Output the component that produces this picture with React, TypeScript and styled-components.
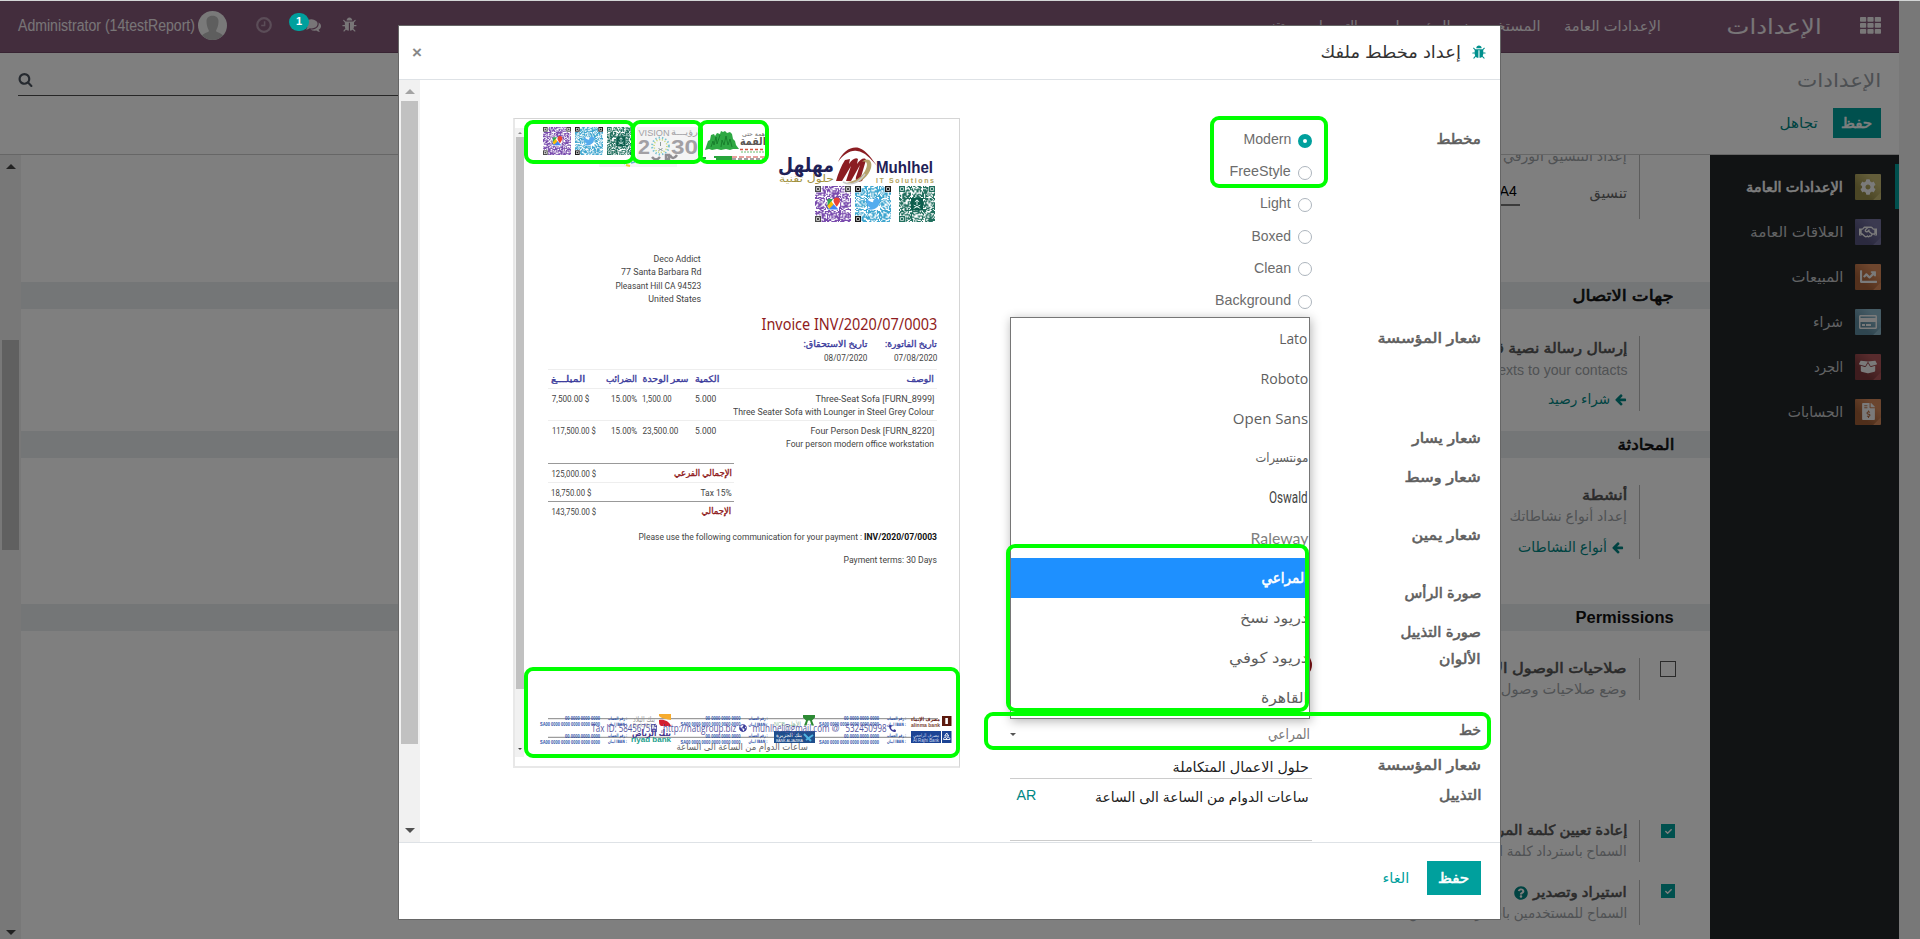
import React, { useLayoutEffect, useRef, useState } from "react";
import styled, { createGlobalStyle } from "styled-components";
import { FaCog, FaRegHandshake, FaChartLine, FaRegCreditCard, FaBoxOpen, FaFileInvoiceDollar, FaQuestionCircle, FaPhoneAlt, FaGlobeAmericas, FaRegFileAlt, FaCheck } from "react-icons/fa";

const UI = `"Liberation Sans", "DejaVu Sans", sans-serif`;
const DOC = `Roboto, "DejaVu Sans", sans-serif`;

const GlobalStyle = createGlobalStyle`
  * { box-sizing: border-box; }
  html, body { margin: 0; padding: 0; overflow: hidden; background: #fff; }
  body { font-family: ${UI}; }
  svg { display: block; flex-shrink: 0; }
`;

/* ---------- text that is condensed or stretched to a set width ---------- */

const FitBox = styled.span<{ $w: number; $lh: number }>`
  display: inline-flex;
  justify-content: center;
  flex-shrink: 0;
  width: ${(p) => p.$w}px;
  height: ${(p) => p.$lh}px;
  line-height: ${(p) => p.$lh}px;
`;
const FitInner = styled.span<{ $size: number; $color: string; $bold?: boolean; $arabic: boolean; $font: string }>`
  flex-shrink: 0;
  white-space: nowrap;
  font-family: ${(p) => p.$font};
  font-size: ${(p) => p.$size}px;
  font-weight: ${(p) => (p.$bold && !p.$arabic ? 700 : 400)};
  -webkit-text-stroke: ${(p) => (p.$bold && p.$arabic ? p.$size * 0.04 : 0)}px ${(p) => p.$color};
  color: ${(p) => p.$color};
`;

type TextProps = { w: number; size?: number; color?: string; bold?: boolean; font?: string; lh?: number; children: string };

function Text({ w, size = 14, color = "#666", bold, font = UI, lh = 20, children }: TextProps) {
  const ref = useRef<HTMLSpanElement>(null);
  const [scale, setScale] = useState(1);
  useLayoutEffect(() => {
    if (ref.current) setScale(w / ref.current.offsetWidth);
  }, [w, children]);
  const arabic = /[\u0600-\u06ff]/.test(children);
  return (
    <FitBox $w={w} $lh={lh} dir={arabic ? "rtl" : "ltr"}>
      <FitInner ref={ref} $size={size} $color={color} $bold={bold} $arabic={arabic} $font={font} style={{ transform: `scaleX(${scale})` }}>
        {children}
      </FitInner>
    </FitBox>
  );
}

/* ---------- icons ---------- */

const glyphs = {
  bug: "M1632 960q0 26-19 45t-45 19h-224q0 171-67 290l208 209q19 19 19 45t-19 45q-18 19-45 19t-45-19l-198-197q-5 5-15 13t-42 28.5-65 36.5-82 29-97 13v-896h-128v896q-51 0-101.5-13.5t-87-33-66-39-43.5-32.5l-15-14-183 207q-20 21-48 21-24 0-43-16-19-18-20.5-44.5t15.5-46.5l202-227q-58-114-58-274h-224q-26 0-45-19t-19-45 19-45 45-19h224v-294l-173-173q-19-19-19-45t19-45 45-19 45 19l173 173h844l173-173q19-19 45-19t45 19 19 45-19 45l-173 173v294h224q26 0 45 19t19 45zm-480-576h-640q0-133 93.5-226.5t226.5-93.5 226.5 93.5 93.5 226.5z",
  comments:
    "M1408 768q0 139-94 257t-256.5 186.5-353.5 68.5q-86 0-176-16-124 88-278 128-36 9-86 16h-3q-11 0-20.5-8t-11.5-21q-1-3-1-6.5t.5-6.5 2-6l2.5-5 3.5-5.5 4-5 4.5-5 4-4.5q5-6 23-25t26-29.5 22.5-29 25-38.5 20.5-44q-124-72-195-177t-71-224q0-139 94-257t256.5-186.5 353.5-68.5 353.5 68.5 256.5 186.5 94 257zm384 256q0 120-71 224.5t-195 176.5q10 24 20.5 44t25 38.5 22.5 29 26 29.5 23 25q1 1 4 4.5t4.5 5 4 5 3.5 5.5l2.5 5 2 6 .5 6.5-1 6.5q-3 14-13 22t-22 7q-50-7-86-16-154-40-278-128-90 16-176 16-271 0-472-132 58 4 88 4 161 0 309-45t264-129q125-92 192-212t67-254q0-77-23-152 129 71 204 178t75 230z",
  search:
    "M1216 832q0-185-131.5-316.5t-316.5-131.5-316.5 131.5-131.5 316.5 131.5 316.5 316.5 131.5 316.5-131.5 131.5-316.5zm512 832q0 52-38 90t-90 38q-54 0-90-38l-343-342q-179 124-399 124-143 0-273.5-55.5t-225-150-150-225-55.5-273.5 55.5-273.5 150-225 225-150 273.5-55.5 273.5 55.5 225 150 150 225 55.5 273.5q0 220-124 399l343 343q37 37 37 90z",
  arrowLeft:
    "M1664 896v128q0 53-32.5 90.5t-84.5 37.5h-704l293 294q38 36 38 90t-38 90l-75 76q-37 37-90 37-52 0-91-37l-651-652q-37-37-37-90 0-52 37-91l651-650q38-38 91-38 52 0 90 38l75 74q38 38 38 91t-38 91l-293 293h704q52 0 84.5 37.5t32.5 90.5z",
};

const Glyph = ({ name, size, color }: { name: keyof typeof glyphs; size: number; color: string }) => (
  <svg width={size} height={size} viewBox="0 0 1792 1792" fill={color}>
    <path d={glyphs[name]} />
  </svg>
);

const AppsIcon = () => (
  <svg width="21" height="17" viewBox="0 0 21 17" fill="#f2eef1">
    {[0, 6, 12].map((y) => [0, 7.4, 14.8].map((x) => <rect key={`${x}-${y}`} x={x} y={y} width="6.2" height="4.8" rx="0.8" />))}
  </svg>
);

const ClockIcon = () => (
  <svg width="16" height="16" viewBox="0 0 16 16" fill="none" stroke="#b79bb0">
    <circle cx="8" cy="8" r="6.8" strokeWidth="2.2" />
    <path d="M8.6 4.2v4.4H5.2" strokeWidth="1.5" />
  </svg>
);

const Avatar = () => (
  <svg width="29" height="29" viewBox="0 0 29 29">
    <defs>
      <clipPath id="avatarClip"><circle cx="14.5" cy="14.5" r="14.5" /></clipPath>
    </defs>
    <g clipPath="url(#avatarClip)">
      <rect width="29" height="29" fill="#f2f2f2" />
      <path d="M8.5 10c0-7 12-7 12 0 0 6-2 8-2.500 10 1 2 8 1.500 9 9h-25c1-7.500 8-7 9-9-.5-2-2.500-4-2.500-10z" fill="#bdbdbd" />
    </g>
  </svg>
);

/* ---------- shell ---------- */

const Screen = styled.div`
  position: relative;
  width: 1920px;
  height: 939px;
  overflow: hidden;
  display: flex;
  background: #fff;
  border-top: 1px solid #d3d6d6;
`;
const Backend = styled.div`
  width: 1899px;
  display: flex;
  flex-direction: column;
`;
const WindowGutter = styled.div`
  width: 21px;
  background: #f1f1f1;
`;
const Navbar = styled.header`
  display: flex;
  justify-content: space-between;
  height: 52px;
  padding: 0 18px;
  background: #875a7b;
  border-bottom: 1px solid #704866;
`;
const NavSide = styled.div`
  display: flex;
  align-items: flex-start;
`;
const Slot = styled.div<{ $top?: number; $left?: number; $right?: number }>`
  display: flex;
  margin: ${(p) => `${p.$top ?? 0}px ${p.$right ?? 0}px 0 ${p.$left ?? 0}px`};
`;
const Badge = styled.span`
  display: flex;
  justify-content: center;
  width: 20px;
  height: 18px;
  margin: 12px -4px 0 17px;
  border-radius: 9px;
  background: #00a09d;
  color: #fff;
  font: 700 11px/17px ${UI};
  z-index: 1;
`;
const ControlPanel = styled.div`
  display: flex;
  justify-content: space-between;
  height: 102px;
  padding: 0 18px;
  border-bottom: 1px solid #ccc;
`;
const SearchBox = styled.div`
  width: 900px;
  height: 43px;
  padding-top: 19px;
  border-bottom: 1px solid #4c4c4c;
`;
const PanelActions = styled.div`
  display: flex;
  flex-direction: column;
  align-items: flex-end;
  padding-top: 15px;
`;
const ButtonRow = styled.div<{ $gap: number; $top: number }>`
  display: flex;
  align-items: center;
  gap: ${(p) => p.$gap}px;
  margin-top: ${(p) => p.$top}px;
`;
const PrimaryButton = styled.button<{ $w: number; $h: number }>`
  display: flex;
  align-items: center;
  justify-content: center;
  width: ${(p) => p.$w}px;
  height: ${(p) => p.$h}px;
  padding: 0;
  border: 0;
  background: #00a09d;
`;
const Main = styled.div`
  display: flex;
  flex: 1;
  min-height: 0;
`;

/* ---------- scroll bars ---------- */

const Track = styled.div<{ $w: number }>`
  display: flex;
  flex-direction: column;
  align-items: center;
  flex-shrink: 0;
  width: ${(p) => p.$w}px;
  background: #f1f1f1;
`;
const Thumb = styled.div<{ $top: number; $h: number; $w: number }>`
  width: ${(p) => p.$w}px;
  height: ${(p) => p.$h}px;
  margin-top: ${(p) => p.$top}px;
  background: #c1c1c1;
`;
const Arrow = styled.i<{ $s: number; $m: string; $down?: boolean; $color: string }>`
  width: 0;
  height: 0;
  margin: ${(p) => p.$m};
  border: ${(p) => p.$s}px solid transparent;
  ${(p) => (p.$down ? `border-bottom: 0; border-top-color: ${p.$color};` : `border-top: 0; border-bottom-color: ${p.$color};`)}
`;

/* ---------- settings page ---------- */

const Settings = styled.div`
  flex: 1;
  overflow: hidden;
  direction: rtl;
`;
const Band = styled.div<{ $mt: number }>`
  height: 27px;
  margin-top: ${(p) => p.$mt}px;
  padding-right: 36px;
  background: #e9ecef;
`;
const SettingRow = styled.div<{ $mt: number; $h: number }>`
  display: flex;
  height: ${(p) => p.$h}px;
  margin-top: ${(p) => p.$mt}px;
`;
const CheckCell = styled.div`
  width: 70px;
  padding: 4px 35px 0 0;
`;
const CheckBox = styled.span<{ $on?: boolean }>`
  display: flex;
  align-items: center;
  justify-content: center;
  width: ${(p) => (p.$on ? 14 : 16)}px;
  height: ${(p) => (p.$on ? 14 : 16)}px;
  margin: ${(p) => (p.$on ? "0" : "-1px -1px 0 0")};
  border: ${(p) => (p.$on ? "0" : "1px solid #555")};
  background: ${(p) => (p.$on ? "#00a09d" : "#fff")};
  color: #fff;
`;
const SettingBody = styled.div`
  display: flex;
  flex-direction: column;
  align-items: flex-start;
  border-right: 1px solid #bbb;
  padding-right: 12px;
`;
const InlineRow = styled.div<{ $mt?: number; $gap?: number; $pad?: number }>`
  display: flex;
  align-items: center;
  gap: ${(p) => p.$gap ?? 0}px;
  margin-top: ${(p) => p.$mt ?? 0}px;
  padding-right: ${(p) => p.$pad ?? 0}px;
`;
const SelectStub = styled.span`
  display: flex;
  width: 170px;
  height: 26px;
  margin-right: 69px;
  padding-right: 3px;
  border-bottom: 2px solid #777;
`;
const Sidebar = styled.nav`
  display: flex;
  flex-direction: column;
  width: 189px;
  padding-top: 9px;
  background: #222629;
`;
const SideItem = styled.div<{ $active?: boolean }>`
  display: flex;
  align-items: center;
  justify-content: flex-end;
  gap: 12px;
  height: 45px;
  padding-right: ${(p) => (p.$active ? 14 : 18)}px;
  border-right: ${(p) => (p.$active ? "4px solid #00a09d" : "0")};
`;
const AppTile = styled.span<{ $color: string; $shade: string }>`
  display: flex;
  align-items: center;
  justify-content: center;
  width: 26px;
  height: 26px;
  border-radius: 1px;
  background:
    linear-gradient(135deg, transparent 84%, ${(p) => p.$color} 86%),
    linear-gradient(45deg, ${(p) => p.$shade} 30%, ${(p) => p.$color} 75%);
  color: #f5f5f5;
`;

/* ---------- dialog ---------- */

const Backdrop = styled.div`
  position: absolute;
  inset: 0;
  background: rgba(0, 0, 0, 0.5);
`;
const Dialog = styled.section`
  position: absolute;
  left: 398px;
  top: 24px;
  width: 1103px;
  height: 895px;
  display: flex;
  flex-direction: column;
  border: 1px solid #666;
  background: #fff;
`;
const DialogHeader = styled.div`
  display: flex;
  justify-content: space-between;
  height: 54px;
  padding: 0 13px 0 14px;
  border-bottom: 1px solid #dee2e6;
`;
const CloseMark = styled.span`
  color: #888;
  font: 700 17px/53px ${UI};
  margin-left: -1px;
`;
const DialogTitle = styled.div`
  display: flex;
  align-items: center;
  gap: 11px;
`;
const DialogBody = styled.div`
  display: flex;
  height: 762px;
`;
const DialogFooter = styled.div`
  display: flex;
  justify-content: flex-end;
  align-items: flex-start;
  height: 77px;
  padding-right: 19px;
  border-top: 1px solid #dee2e6;
`;
const Paper = styled.div`
  display: flex;
  width: 447px;
  height: 650px;
  margin: 38px 0 0 93px;
  border: 1px solid #d5d5d5;
  border-left: 2px solid #e8e8e8;
  border-bottom: 2px solid #e8e8e8;
`;
const PaperScroll = styled.div`
  display: flex;
  margin-top: 9px;
  height: 629px;
`;
const Page = styled.div`
  display: flex;
  flex-direction: column;
  width: 435px;
`;
const LogoStrip = styled.div`
  display: flex;
  height: 41px;
  padding: 8px 0 0 19px;
`;
const CompanyBlock = styled.div`
  display: flex;
  flex-direction: column;
  align-items: flex-end;
  padding-right: 24px;
  margin-top: -13px;
  height: 76px;
`;
const QrRow = styled.div<{ $gap: number[] }>`
  display: flex;
  & > svg:nth-child(2) { margin: 0 ${(p) => p.$gap[1]}px 0 ${(p) => p.$gap[0]}px; }
`;
const Address = styled.div`
  display: flex;
  flex-direction: column;
  align-items: flex-end;
  margin-top: 29px;
  padding-right: 258px;
`;
const InvoiceBody = styled.div`
  display: flex;
  flex-direction: column;
  align-items: flex-end;
  width: 389px;
  margin: 7px 0 0 24px;
`;
const Dates = styled.div`
  display: flex;
  gap: 18px;
  margin-top: 2px;
`;
const DateCell = styled.div`
  display: flex;
  flex-direction: column;
  align-items: flex-end;
`;
const ItemRow = styled.div<{ $h: number; $pt: number }>`
  display: grid;
  grid-template-columns: 50px 35.5px 53.5px 30px 1fr;
  width: 389px;
  height: ${(p) => p.$h}px;
  padding: ${(p) => p.$pt}px 3px 0 3.5px;
  border-top: 1px solid #eee;
`;
const ItemCell = styled.div<{ $end?: boolean; $pad?: number }>`
  display: flex;
  flex-direction: column;
  align-items: ${(p) => (p.$end ? "flex-end" : "flex-start")};
  padding-left: ${(p) => p.$pad ?? 0}px;
`;
const Totals = styled.div`
  align-self: flex-start;
  width: 186px;
  margin-top: 0.5px;
`;
const TotalRow = styled.div<{ $strong?: boolean }>`
  display: flex;
  justify-content: space-between;
  height: 19.3px;
  padding: 1px 2.5px 0 3.5px;
  border-top: 1px solid ${(p) => (p.$strong ? "#999" : "#eee")};
`;
const PaymentLine = styled.div<{ $mt: number }>`
  display: flex;
  gap: 2px;
  margin-top: ${(p) => p.$mt}px;
`;
const PageFooter = styled.div`
  position: relative;
  height: 46px;
  margin-top: auto;
  padding-top: 5px;
`;
const ContactRow = styled.div`
  position: absolute;
  left: 67px;
  top: 13px;
  display: flex;
  align-items: center;
  color: #3c3c9a;
`;
const HoursRow = styled.div`
  position: absolute;
  left: 153px;
  top: 29px;
`;

/* ---------- form ---------- */

const Form = styled.div`
  display: flex;
  flex-direction: column;
  width: 521px;
  padding: 47px 19px 0 0;
  margin-left: auto;
`;
const FormRow = styled.div<{ $h: number }>`
  display: flex;
  justify-content: space-between;
  height: ${(p) => p.$h}px;
`;
const Field = styled.div`
  position: relative;
  width: 302px;
  margin-left: 31px;
`;
const RadioRow = styled.label`
  display: flex;
  align-items: center;
  justify-content: flex-end;
  gap: 7px;
  height: 32.2px;
`;
const RadioDot = styled.span<{ $on?: boolean }>`
  width: 14px;
  height: 14px;
  margin-top: 3px;
  border-radius: 50%;
  border: ${(p) => (p.$on ? "5px solid #00a09d" : "1px solid #adb5bd")};
`;
const RadioGroup = styled.div`
  display: flex;
  flex-direction: column;
  margin-top: -4px;
`;
const Swatch = styled.span`
  display: block;
  width: 24px;
  height: 24px;
  margin: 6px 0 0 278px;
  border-radius: 50%;
  background: #7d1014;
`;
const Menu = styled.div`
  position: absolute;
  left: 0;
  top: -401px;
  width: 300px;
  height: 402px;
  z-index: 2;
  border: 1px solid #767676;
  background: #fff;
  box-shadow: 1px 2px 10px rgba(0, 0, 0, 0.3);
`;
const Option = styled.div<{ $selected?: boolean }>`
  display: flex;
  align-items: center;
  justify-content: flex-end;
  height: 40px;
  padding-right: 1px;
  background: ${(p) => (p.$selected ? "#1e90ff" : "#fff")};
`;
const SelectValue = styled.div`
  display: flex;
  align-items: center;
  justify-content: space-between;
  height: 32px;
  padding: 0 2px 0 0;
`;
const Input = styled.div<{ $h: number; $top: number }>`
  display: flex;
  justify-content: space-between;
  height: ${(p) => p.$h}px;
  padding: ${(p) => p.$top}px 3px 0 6px;
  border-bottom: 1px solid #ccc;
`;
const Highlight = styled.div<{ $x: number; $y: number; $w: number; $h: number }>`
  position: absolute;
  z-index: 5;
  left: ${(p) => p.$x}px;
  top: ${(p) => p.$y - 1}px;
  width: ${(p) => p.$w}px;
  height: ${(p) => p.$h}px;
  border: 4px solid #0f0;
  border-radius: 9px;
`;

/* ---------- drawings ---------- */

function modules(seed: number, n: number) {
  let s = seed;
  let d = "";
  for (let y = 0; y < n; y++)
    for (let x = 0; x < n; x++) {
      s = (s * 16807) % 2147483647;
      const corner = (x < 6 && y < 6) || (x >= n - 6 && y < 6) || (x < 6 && y >= n - 6);
      const mid = Math.abs(x - n / 2) < 5 && Math.abs(y - n / 2) < 5;
      if (!corner && !mid && s / 2147483647 > 0.4) d += `M${x} ${y}h1v1h-1z`;
    }
  return d;
}

function Qr({ size, color, eye, kind }: { size: number; color: string; eye: string; kind: "map" | "bird" | "crest" }) {
  return (
    <svg width={size} height={size} viewBox="0 0 33 33">
      <path d={modules(kind.length * 977 + 31, 33)} fill={color} />
      {[[0, 0], [27.5, 0], [0, 27.5]].map(([x, y]) => (
        <g key={`${x}${y}`}>
          <rect x={x + 0.6} y={y + 0.6} width="4.3" height="4.3" fill="none" stroke={eye} strokeWidth="1.2" />
          <rect x={x + 1.8} y={y + 1.8} width="1.9" height="1.9" fill={eye} />
        </g>
      ))}
      {kind === "map" && (
        <g>
          <path d="M11.5 12h5l-5 8z" fill="#34a853" />
          <path d="M11.5 21l5-5 5 5.5h-10z" fill="#4285f4" />
          <path d="M13 21l4-4-2-3-3.5 4z" fill="#fbbc05" />
          <path d="M17 13.5a2.9 2.9 0 015.8 0c0 2-2.9 5.5-2.9 5.5s-2.9-3.5-2.9-5.5z" fill="#ea4335" />
        </g>
      )}
      {kind === "bird" && (
        <path d="M11 12c1.8 2 3.6 2.8 5.6 2.9-.3-2 1.4-3.9 3.4-3.5.9.1 1.5.7 1.9 1l1.5-.5-.8 1.5.9-.2-1.1 1.3c.2 5.3-6.2 9.200-11.900 6.100 1.500 0 2.700-.4 3.500-1.100-1.300-.2-2.200-1-2.500-2h1c-1.300-.5-2-1.500-2-2.800-.5-.8-.2-1.900.5-2.700z" fill="#55acee" />
      )}
      {kind === "crest" && (
        <g>
          <rect x="11" y="11" width="11" height="11.5" fill="#0b5d4c" />
          <path d="M16.5 12.5v5M14.5 14.5l2-1.5 2 1.5M13.5 20.5l6-3M19.5 20.5l-6-3" stroke="#dff3ee" strokeWidth="0.9" fill="none" />
        </g>
      )}
    </svg>
  );
}

const QrSet = ({ size, gap }: { size: number; gap: number[] }) => (
  <QrRow $gap={gap}>
    <Qr size={size} color="#7a4cae" eye="#4a4a4a" kind="map" />
    <Qr size={size} color="#3fa6cf" eye="#1c1c1c" kind="bird" />
    <Qr size={size} color="#22705f" eye="#22705f" kind="crest" />
  </QrRow>
);

const VisionLogo = () => (
  <svg width="100" height="41" viewBox="0 0 100 41">
    <rect x="38" y="0" width="62" height="33" fill="#f4f4f4" />
    <rect x="0" y="33" width="78" height="7" fill="#f5f5f5" />
    <g fill="#a2a0a4" fontFamily={UI}>
      <text x="39.500" y="9" fontSize="9.5" textLength="31" lengthAdjust="spacingAndGlyphs">VISION</text>
      <text x="72" y="7.500" fontSize="8.5" textLength="27" lengthAdjust="spacingAndGlyphs" fontFamily="DejaVu Sans">رؤيـــة</text>
      <text x="39" y="27" fontSize="20.5" fontWeight="700" textLength="12" lengthAdjust="spacingAndGlyphs">2</text>
      <text x="72" y="27" fontSize="20.5" fontWeight="700" textLength="27" lengthAdjust="spacingAndGlyphs">30</text>
      <path d="M53 30q4 5 8 0M67 28h3v4h-3zM71 28q3 6 7 0" stroke="#8f8d91" strokeWidth="2.5" fill="none" />
    </g>
    <circle cx="61.500" cy="19" r="8.400" fill="none" stroke="#7cc3d2" strokeWidth="2" strokeDasharray="1.4 2" />
    <circle cx="61.500" cy="19" r="6.400" fill="none" stroke="#c3d970" strokeWidth="1.5" strokeDasharray="1.1 1.700" />
    <path d="M61.500 15v4M59.500 21.500l4 2M63.500 21.500l-4 2" stroke="#8a9a98" fill="none" />
    <path d="M23 35l3 2" stroke="#58b2c8" strokeWidth="1.5" />
    <path d="M27 38l4 1" stroke="#f0d031" strokeWidth="2" />
    <path d="M32 36l4-1" stroke="#5fb0d0" strokeWidth="1.5" />
  </svg>
);

const SummitLogo = () => (
  <svg width="68" height="36" viewBox="0 0 68 36">
    <path d="M6 23l2-6 1-3 2-1 1-5 3-1 1 2 2-3 3 1 1-3 2 1 2-1 2 2 3-1 2 2 1 5 2 2 1 4 3 4h-6l-3 1-4-1-5 1-4-1-5 1-3-1z" fill="#2fa944" />
    <path d="M12 20l2-6 1 4 2-8 1 7 3-9M22 20l1-7 2 5 2-9 2 9 2-6 2 8" stroke="#167a2a" strokeWidth="0.9" fill="none" />
    <text x="43" y="9" fontFamily="DejaVu Sans" fontSize="6" fill="#666" textLength="23" lengthAdjust="spacingAndGlyphs">همة حتى</text>
    <text x="41" y="18" fontFamily="DejaVu Sans" fontSize="11" fontWeight="700" fill="#5b5552" textLength="26" lengthAdjust="spacingAndGlyphs">القمة</text>
    <path d="M41 22.500h26" stroke="#d2533e" strokeWidth="1.5" strokeDasharray="3 2" />
    <path d="M42 25h24" stroke="#6cbb6e" strokeWidth="1.2" strokeDasharray="2 1" />
    <path d="M0 31h7M15 30h18M17 32h16" stroke="#27a53c" strokeWidth="2" />
    <path d="M33 30h34" stroke="#d0443c" strokeWidth="1.2" strokeDasharray="5 2" />
    <path d="M33 32h34" stroke="#444" strokeWidth="1" strokeDasharray="4 2" />
  </svg>
);

const MuhlhelLogo = () => (
  <svg width="158" height="39" viewBox="0 0 158 39">
    <text x="1" y="25" fontFamily="DejaVu Sans" fontSize="20" fontWeight="700" fill="#1f2157" textLength="56" lengthAdjust="spacingAndGlyphs">مهلهل</text>
    <text x="2" y="35" fontFamily="DejaVu Sans" fontSize="10" fill="#a08f3c" textLength="55" lengthAdjust="spacingAndGlyphs">حلول تقنية</text>
    <path d="M59 34c2-7 5-15 9-21l5-1-1 5c3-5 7-7 9-5l-1 5c3-5 8-7 9-4l-5 17c1 1 3 0 4-2l-3 6c-5 2-7 0-6-4l4-12-9 16h-5l5-15-9 15z" fill="#8b1d22" />
    <path d="M61 15C66 4 74-1 82 1c8 3 13 11 18 18-7-8-12-14-20-15-7-1-13 3-19 11z" fill="#8b1d22" />
    <path d="M69 35c12 4 22-4 25-14 2-8-4-11-9-6 6-2 6 4 3 9-4 7-11 11-19 11z" fill="#b6a26b" />
    <path d="M66 35c9 5 17-1 22-8" stroke="#c9c9c9" strokeWidth="1.5" fill="none" />
    <text x="99" y="26" fontFamily={UI} fontSize="16" fontWeight="700" fill="#1f2157" textLength="57" lengthAdjust="spacingAndGlyphs">Muhlhel</text>
    <text x="99" y="35.500" fontFamily={UI} fontSize="7" fontWeight="700" fill="#b3a45c" textLength="58">IT Solutions</text>
  </svg>
);

const BankStrip = () => (
  <svg width="436" height="36" viewBox="0 0 436 36">
    <path d="M24 6.7h390M24 25.3h390" stroke="#777" strokeWidth="0.9" />
    {[76, 216.5, 355].map((x) =>
      [0, 17.3].map((y) => (
        <g key={`${x}-${y}`} fontFamily={UI} fontSize="4.6" fontWeight="700" fill="#2c50a8">
          <text x={x - 35} y={y + 8.2} textLength="35" lengthAdjust="spacingAndGlyphs">00 0000 0000 0000</text>
          <text x={x - 60} y={y + 14.2} textLength="60" lengthAdjust="spacingAndGlyphs">SA00 0000 0000 0000 0000 0000</text>
          <text x={x + 8} y={y + 7.5} textLength="19" lengthAdjust="spacingAndGlyphs" fontFamily="DejaVu Sans">رقم الحساب :</text>
          <text x={x + 8} y={y + 13.5} textLength="19" lengthAdjust="spacingAndGlyphs" fontFamily="DejaVu Sans">ايبان IBAN :</text>
        </g>
      ))
    )}
    <text x="109" y="10" fontFamily="DejaVu Sans" fontSize="8" fill="#999" textLength="22" lengthAdjust="spacingAndGlyphs">بنك البلاد</text>
    <text x="109" y="15" fontFamily={UI} fontSize="4.5" fill="#aaa" textLength="23" lengthAdjust="spacingAndGlyphs">Bank Albilad</text>
    <path d="M135 2h12v6c-4-1-9-1-12-4z" fill="#f7ac2f" />
    <path d="M135 8c5-1 10 1 12 6h-10c-2-1-2-3-2-6z" fill="#d3202f" />
    <text x="108" y="24" fontFamily="DejaVu Sans" fontSize="9" fontWeight="700" fill="#44338c" textLength="39" lengthAdjust="spacingAndGlyphs">بنك الرياض</text>
    <text x="107" y="30" fontFamily={UI} fontSize="7" fontWeight="700" fill="#1ba08c" textLength="40" lengthAdjust="spacingAndGlyphs">riyad bank</text>
    <text x="250" y="14" fontFamily={UI} fontSize="6" fill="#8bb79d" textLength="11" lengthAdjust="spacingAndGlyphs">NCB</text>
    <text x="262" y="14" fontFamily="DejaVu Sans" fontSize="6" fill="#8bb79d" textLength="15" lengthAdjust="spacingAndGlyphs">الأهلي</text>
    <path d="M279 3h12v2.500l-3 3 2 5h-2.500l-1.500-5h-2l-1.500 5H280l2-5-3-3z" fill="#2d8a34" />
    <rect x="250" y="19" width="41" height="12" fill="#1f4e8c" />
    <path d="M280 22l7 7M282 28l7-5" stroke="#4fb3e0" strokeWidth="2" />
    <text x="252" y="25" fontFamily="DejaVu Sans" fontSize="5.5" fill="#fff" textLength="26" lengthAdjust="spacingAndGlyphs">بنك الجزيرة</text>
    <text x="252" y="30" fontFamily={UI} fontSize="4" fill="#fff" textLength="27" lengthAdjust="spacingAndGlyphs">BANK ALJAZIRA</text>
    <text x="387" y="9" fontFamily="DejaVu Sans" fontSize="5.5" fontWeight="700" fill="#6a2416" textLength="29" lengthAdjust="spacingAndGlyphs">مصرف الإنماء</text>
    <text x="387" y="14.5" fontFamily={UI} fontSize="5.5" fontWeight="700" fill="#7a4636" textLength="29" lengthAdjust="spacingAndGlyphs">alinma bank</text>
    <rect x="418" y="4" width="9.5" height="10" fill="#5c1a0e" />
    <rect x="421.3" y="6" width="2.6" height="6" fill="#fff" />
    <rect x="387" y="19" width="30" height="12" fill="#1c4394" />
    <rect x="418" y="19" width="9.5" height="12" fill="#1c4394" />
    <text x="389" y="24.5" fontFamily="DejaVu Sans" fontSize="5" fill="#cfd9f0" textLength="26" lengthAdjust="spacingAndGlyphs">مصرف الراجحي</text>
    <text x="389" y="30" fontFamily={UI} fontSize="5" fill="#cfd9f0" textLength="26" lengthAdjust="spacingAndGlyphs">Al Rajhi Bank</text>
    <path d="M422.7 21l2 3h-4zM419.500 27.500c0-3 3-3 3 0 0-3 3.500-3 3.500 0z" fill="none" stroke="#fff" strokeWidth="0.9" />
  </svg>
);

/* ---------- data ---------- */

const sideItems = [
  { label: "الإعدادات العامة", w: 97, color: "#c6bb74", shade: "#978d4a", icon: <FaCog size={16} /> },
  { label: "العلاقات العامة", w: 93, color: "#7674a0", shade: "#56547e", icon: <FaRegHandshake size={18} /> },
  { label: "المبيعات", w: 52, color: "#dc8c5c", shade: "#a9633a", icon: <FaChartLine size={17} /> },
  { label: "شراء", w: 30, color: "#8db8cb", shade: "#5f8ca1", icon: <FaRegCreditCard size={18} /> },
  { label: "الجرد", w: 29, color: "#b0575a", shade: "#7d393c", icon: <FaBoxOpen size={18} /> },
  { label: "الحسابات", w: 55, color: "#d68a5c", shade: "#a05f37", icon: <FaFileInvoiceDollar size={17} /> },
];

const layouts: [string, number][] = [["Modern", 48], ["FreeStyle", 61], ["Light", 31], ["Boxed", 40], ["Clean", 37], ["Background", 76]];

const fonts: { name: string; w: number; font?: string; size?: number; color?: string }[] = [
  { name: "Lato", w: 28.5, font: `"Open Sans"` },
  { name: "Roboto", w: 48, font: `"Open Sans"` },
  { name: "Open Sans", w: 75, font: `"Open Sans"` },
  { name: "مونتسيرات", w: 53, size: 13 },
  { name: "Oswald", w: 39, font: "Roboto", size: 16.5, color: "#444" },
  { name: "Raleway", w: 58, font: "Lato", color: "#808080" },
  { name: "المراعي", w: 46, color: "#fff" },
  { name: "دريود نسخ", w: 68 },
  { name: "دريود كوفي", w: 79 },
  { name: "القاهرة", w: 47 },
];

const NAVY = "#3b3b9c";
const WINE = "#8f1b20";
const INK = "#444";

const D = (p: TextProps) => <Text font={DOC} size={9.3} lh={13} color={INK} {...p} />;

const lines = [
  { name: "Three-Seat Sofa [FURN_8999]", nw: 119, note: "Three Seater Sofa with Lounger in Steel Grey Colour", ow: 201, qty: "5.000", price: "1,500.00", pw: 30, amount: "7,500.00 $", aw: 37.5, h: 32 },
  { name: "Four Person Desk [FURN_8220]", nw: 124, note: "Four person modern office workstation", ow: 148, qty: "5.000", price: "23,500.00", pw: 36, amount: "117,500.00 $", aw: 44, h: 42 },
];

/* ---------- page parts ---------- */

const TopBar = () => (
  <Navbar>
    <NavSide>
      <Slot $top={14}><Text w={177} size={16} color="#f0eaee" lh={22}>Administrator (14testReport)</Text></Slot>
      <Slot $top={10} $left={3}><Avatar /></Slot>
      <Slot $top={16} $left={29}><ClockIcon /></Slot>
      <Badge>1</Badge>
      <Slot $top={16}><Glyph name="comments" size={16} color="#f0eaee" /></Slot>
      <Slot $top={16} $left={21}><Glyph name="bug" size={16} color="#f0eaee" /></Slot>
    </NavSide>
    <NavSide>
      <Slot $top={15} $right={23}><Text w={22} color="#f0eaee">تقني</Text></Slot>
      <Slot $top={15} $right={24}><Text w={51} color="#f0eaee">الترجمات</Text></Slot>
      <Slot $top={15} $right={23}><Text w={159} color="#f0eaee">المستخدمون والمؤسسات</Text></Slot>
      <Slot $top={15} $right={66}><Text w={97} color="#f0eaee">الإعدادات العامة</Text></Slot>
      <Slot $top={11} $right={38}><Text w={95} size={21} color="#f0eaee" lh={30}>الإعدادات</Text></Slot>
      <Slot $top={16}><AppsIcon /></Slot>
    </NavSide>
  </Navbar>
);

const Toolbar = () => (
  <ControlPanel>
    <SearchBox><Glyph name="search" size={15} color="#4c5560" /></SearchBox>
    <PanelActions>
      <Text w={84} size={19} color="#9aa0a6" lh={26}>الإعدادات</Text>
      <ButtonRow $gap={15} $top={14}>
        <Text w={38} color="#008784">تجاهل</Text>
        <PrimaryButton $w={48} $h={30}><Text w={31} color="#fff" bold>حفظ</Text></PrimaryButton>
      </ButtonRow>
    </PanelActions>
  </ControlPanel>
);

const SettingsPage = () => (
  <Settings>
    <SettingRow $mt={0} $h={64}>
      <CheckCell />
      <SettingBody>
        <InlineRow $mt={-9}><Text w={190} color="#a0a4a8">إعداد التنسيق الورقي للمستندات</Text></InlineRow>
        <InlineRow $mt={14}>
          <Text w={38} color="#666" lh={26}>تنسيق</Text>
          <SelectStub><Text w={17} size={15} color="#000" lh={22}>A4</Text></SelectStub>
        </InlineRow>
      </SettingBody>
    </SettingRow>
    <Band $mt={63}><Text w={101} size={16} color="#111" bold lh={28}>جهات الاتصال</Text></Band>
    <SettingRow $mt={27} $h={75}>
      <CheckCell />
      <SettingBody>
        <Text w={166} color="#555" bold lh={25}>إرسال رسالة نصية قصيرة</Text>
        <Text w={170} size={15} color="#a0a4a8" lh={18}>Send texts to your contacts</Text>
        <InlineRow $mt={9} $gap={4}><Glyph name="arrowLeft" size={13} color="#008784" /><Text w={62} color="#008784" lh={22}>شراء رصيد</Text></InlineRow>
      </SettingBody>
    </SettingRow>
    <Band $mt={20}><Text w={57} size={16} color="#111" bold lh={28}>المحادثة</Text></Band>
    <SettingRow $mt={27} $h={74}>
      <CheckCell />
      <SettingBody>
        <Text w={45} color="#555" bold lh={20}>أنشطة</Text>
        <Text w={118} color="#a0a4a8" lh={22}>إعداد أنواع نشاطاتك</Text>
        <InlineRow $mt={9} $gap={4} $pad={3}><Glyph name="arrowLeft" size={13} color="#008784" /><Text w={89} color="#008784" lh={22}>أنواع النشاطات</Text></InlineRow>
      </SettingBody>
    </SettingRow>
    <Band $mt={45}><Text w={98} size={16} color="#111" bold lh={28}>Permissions</Text></Band>
    <SettingRow $mt={27} $h={42}>
      <CheckCell><CheckBox /></CheckCell>
      <SettingBody>
        <Text w={186} color="#555" bold lh={21}>صلاحيات الوصول الافتراضية</Text>
        <Text w={242} color="#a0a4a8" lh={21}>وضع صلاحيات وصول للمستخدمين الجدد</Text>
      </SettingBody>
    </SettingRow>
    <SettingRow $mt={120} $h={42}>
      <CheckCell><CheckBox $on><FaCheck size={7} /></CheckBox></CheckCell>
      <SettingBody>
        <Text w={145} color="#555" bold lh={21}>إعادة تعيين كلمة المرور</Text>
        <Text w={262} color="#a0a4a8" lh={21}>السماح باسترداد كلمة المرور من صفحة الدخول</Text>
      </SettingBody>
    </SettingRow>
    <SettingRow $mt={18} $h={45}>
      <CheckCell><CheckBox $on><FaCheck size={7} /></CheckBox></CheckCell>
      <SettingBody>
        <InlineRow $gap={5} $mt={2}><Text w={94} color="#555" bold lh={21}>استيراد وتصدير</Text><FaQuestionCircle size={14} color="#008784" /></InlineRow>
        <Text w={258} color="#a0a4a8" lh={21}>السماح للمستخدمين باستيراد بيانات من ملفات</Text>
      </SettingBody>
    </SettingRow>
  </Settings>
);

const Invoice = () => (
  <Paper>
    <PaperScroll>
      <Track $w={9}>
        <Arrow $s={2.5} $m="4px 0 0 0" $color="#888" />
        <Thumb $w={8} $top={3} $h={552} />
        <Arrow $s={2.5} $m="59px 0 0 0" $down $color="#444" />
      </Track>
    </PaperScroll>
    <Page>
      <LogoStrip>
        <QrSet size={28} gap={[4, 4]} />
        <Slot $left={-36}><VisionLogo /></Slot>
        <Slot><SummitLogo /></Slot>
      </LogoStrip>
      <CompanyBlock>
        <MuhlhelLogo />
        <QrSet size={36} gap={[4, 8]} />
      </CompanyBlock>
      <Address>
        <D w={47} lh={13.3}>Deco Addict</D>
        <D w={80} lh={13.3}>77 Santa Barbara Rd</D>
        <D w={86} lh={13.3}>Pleasant Hill CA 94523</D>
        <D w={52.5} lh={13.3}>United States</D>
      </Address>
      <InvoiceBody>
        <D w={176} size={16} lh={24} color={WINE} font={`"Noto Sans", sans-serif`}>Invoice INV/2020/07/0003</D>
        <Dates>
          <DateCell><D w={64} color={NAVY} bold size={8.8}>تاريخ الاستحقاق:</D><D w={43}>08/07/2020</D></DateCell>
          <DateCell><D w={52} color={NAVY} bold size={8.8}>تاريخ الفاتورة:</D><D w={43}>07/08/2020</D></DateCell>
        </Dates>
        <Slot $top={5} />
        <ItemRow $h={19} $pt={3}>
          <ItemCell><D w={34} color={NAVY} bold size={8.8}>المبلـــغ</D></ItemCell>
          <ItemCell $end><D w={31} color={NAVY} bold size={8.8}>الضرائب</D></ItemCell>
          <ItemCell $pad={5}><D w={46} color={NAVY} bold size={8.8}>سعر الوحدة</D></ItemCell>
          <ItemCell $pad={5}><D w={24} color={NAVY} bold size={8.8}>الكمية</D></ItemCell>
          <ItemCell $end><D w={27} color={NAVY} bold size={8.8}>الوصف</D></ItemCell>
        </ItemRow>
        {lines.map((l) => (
          <ItemRow key={l.name} $h={l.h} $pt={3}>
            <ItemCell><D w={l.aw}>{l.amount}</D></ItemCell>
            <ItemCell $end><D w={26}>15.00%</D></ItemCell>
            <ItemCell $pad={5}><D w={l.pw}>{l.price}</D></ItemCell>
            <ItemCell $pad={5}><D w={21}>{l.qty}</D></ItemCell>
            <ItemCell $end><D w={l.nw}>{l.name}</D><D w={l.ow}>{l.note}</D></ItemCell>
          </ItemRow>
        ))}
        <Totals>
          <TotalRow $strong><D w={45} lh={17}>125,000.00 $</D><D w={58} lh={17} color={WINE} bold size={8.8}>الإجمالي الفرعي</D></TotalRow>
          <TotalRow><D w={40} lh={17}>18,750.00 $</D><D w={31} lh={17}>Tax 15%</D></TotalRow>
          <TotalRow $strong><D w={45} lh={17}>143,750.00 $</D><D w={30} lh={17} color={WINE} bold size={8.8}>الإجمالي</D></TotalRow>
        </Totals>
        <PaymentLine $mt={9}>
          <D w={224}>Please use the following communication for your payment :</D>
          <D w={73} color="#111" bold>INV/2020/07/0003</D>
        </PaymentLine>
        <PaymentLine $mt={10}><D w={93}>Payment terms: 30 Days</D></PaymentLine>
      </InvoiceBody>
      <PageFooter>
        <BankStrip />
        <ContactRow>
          <Text w={59} size={10.5} font={`"Open Sans"`} color="#5555a0" lh={16}>Tax ID: 5845675</Text>
          <FaRegFileAlt size={8} />
          <Slot $left={5} />
          <Text w={73} size={10.5} font={`"Open Sans"`} color="#5555a0" lh={16}>http://natigroup.biz</Text>
          <Slot $left={3} />
          <FaGlobeAmericas size={8} />
          <Slot $left={6} />
          <Text w={77} size={10.5} font={`"Open Sans"`} color="#5555a0" lh={16}>muhlhel@gmail.com</Text>
          <Slot $left={2} />
          <Text w={8} size={9} color="#5555a0" lh={16}>@</Text>
          <Slot $left={6} />
          <Text w={41} size={10.5} font={`"Open Sans"`} color="#5555a0" lh={16}>532450998</Text>
          <Slot $left={2} />
          <FaPhoneAlt size={7} />
        </ContactRow>
        <HoursRow><Text w={131} size={9.5} color="#666" lh={14}>ساعات الدوام من الساعة الى الساعة</Text></HoursRow>
      </PageFooter>
      <Slot $top={13} />
    </Page>
  </Paper>
);

const Label = ({ w, children }: { w: number; children: string }) => <Text w={w} color="#5e5e5e" bold lh={24}>{children}</Text>;

const EmptyFieldRow = ({ label, w, h }: { label: string; w: number; h: number }) => (
  <FormRow $h={h}><Field /><Label w={w}>{label}</Label></FormRow>
);

const SettingsForm = () => (
  <Form>
    <FormRow $h={199}>
      <Field>
        <RadioGroup>
          {layouts.map(([name, w], i) => (
            <RadioRow key={name}><Text w={w} size={15} color="#6c6c6c" lh={22}>{name}</Text><RadioDot $on={i === 0} /></RadioRow>
          ))}
        </RadioGroup>
      </Field>
      <Label w={44}>مخطط</Label>
    </FormRow>
    <EmptyFieldRow h={100} w={104} label="شعار المؤسسة" />
    <EmptyFieldRow h={39} w={69} label="شعار يسار" />
    <EmptyFieldRow h={58} w={76} label="شعار وسط" />
    <EmptyFieldRow h={58} w={69} label="شعار يمين" />
    <EmptyFieldRow h={39} w={77} label="صورة الرأس" />
    <EmptyFieldRow h={27} w={81} label="صورة التذييل" />
    <FormRow $h={71}><Field><Swatch /></Field><Label w={42}>الألوان</Label></FormRow>
    <FormRow $h={35}>
      <Field>
        <SelectValue>
          <Arrow $s={3.5} $m="0" $down $color="#555" />
          <Text w={42} color="#777">المراعي</Text>
        </SelectValue>
        <Menu>
          {fonts.map((f) => (
            <Option key={f.name} $selected={f.name === "المراعي"}>
              <Text w={f.w} size={f.size ?? 15} bold={f.name === "المراعي"} font={f.font ? `${f.font}, sans-serif` : UI} color={f.color ?? "#5e5e5e"} lh={24}>{f.name}</Text>
            </Option>
          ))}
        </Menu>
      </Field>
      <Label w={22}>خط</Label>
    </FormRow>
    <FormRow $h={30}>
      <Field><Input $h={26} $top={4}><i /><Text w={136} color="#222">حلول الاعمال المتكاملة</Text></Input></Field>
      <Label w={104}>شعار المؤسسة</Label>
    </FormRow>
    <FormRow $h={59}>
      <Field><Input $h={58} $top={2}><Text w={20} size={15} color="#008784">AR</Text><Slot $top={2}><Text w={214} color="#222">ساعات الدوام من الساعة الى الساعة</Text></Slot></Input></Field>
      <Label w={42}>التذييل</Label>
    </FormRow>
  </Form>
);

const highlights = [
  [524, 120, 111, 44], [631, 120, 72, 44], [698, 120, 71, 44], [1210, 116, 118, 72],
  [1006, 544, 303, 168], [984, 712, 507, 38], [524, 667, 436, 91],
];

export default function App() {
  return (
    <Screen>
      <GlobalStyle />
      <Backend>
        <TopBar />
        <Toolbar />
        <Main>
          <Track $w={21}>
            <Arrow $s={5} $m="9px 0 0 0" $color="#444" />
            <Thumb $w={17} $top={171} $h={210} />
            <Arrow $s={5} $m="380px 0 0 0" $down $color="#444" />
          </Track>
          <SettingsPage />
          <Sidebar>
            {sideItems.map((s, i) => (
              <SideItem key={s.label} $active={i === 0}>
                <Text w={s.w} bold={i === 0} color={i === 0 ? "#fff" : "#c5c7c9"}>{s.label}</Text>
                <AppTile $color={s.color} $shade={s.shade}>{s.icon}</AppTile>
              </SideItem>
            ))}
          </Sidebar>
        </Main>
      </Backend>
      <WindowGutter />
      <Backdrop />
      <Dialog>
        <DialogHeader>
          <CloseMark>×</CloseMark>
          <DialogTitle>
            <Text w={140} size={17} color="#333" lh={26}>إعداد مخطط ملفك</Text>
            <Glyph name="bug" size={15} color="#00908d" />
          </DialogTitle>
        </DialogHeader>
        <DialogBody>
          <Track $w={21}>
            <Arrow $s={5} $m="9px 0 0 0" $color="#a3a3a3" />
            <Thumb $w={17} $top={7} $h={643} />
            <Arrow $s={5} $m="84px 0 0 0" $down $color="#505050" />
          </Track>
          <Invoice />
          <SettingsForm />
        </DialogBody>
        <DialogFooter>
          <ButtonRow $gap={18} $top={18}>
            <Text w={27} color="#00a09d">الغاء</Text>
            <PrimaryButton $w={54} $h={34}><Text w={31} color="#fff" bold>حفظ</Text></PrimaryButton>
          </ButtonRow>
        </DialogFooter>
      </Dialog>
      {highlights.map(([x, y, w, h]) => (
        <Highlight key={`${x}-${y}`} $x={x} $y={y} $w={w} $h={h} />
      ))}
    </Screen>
  );
}
